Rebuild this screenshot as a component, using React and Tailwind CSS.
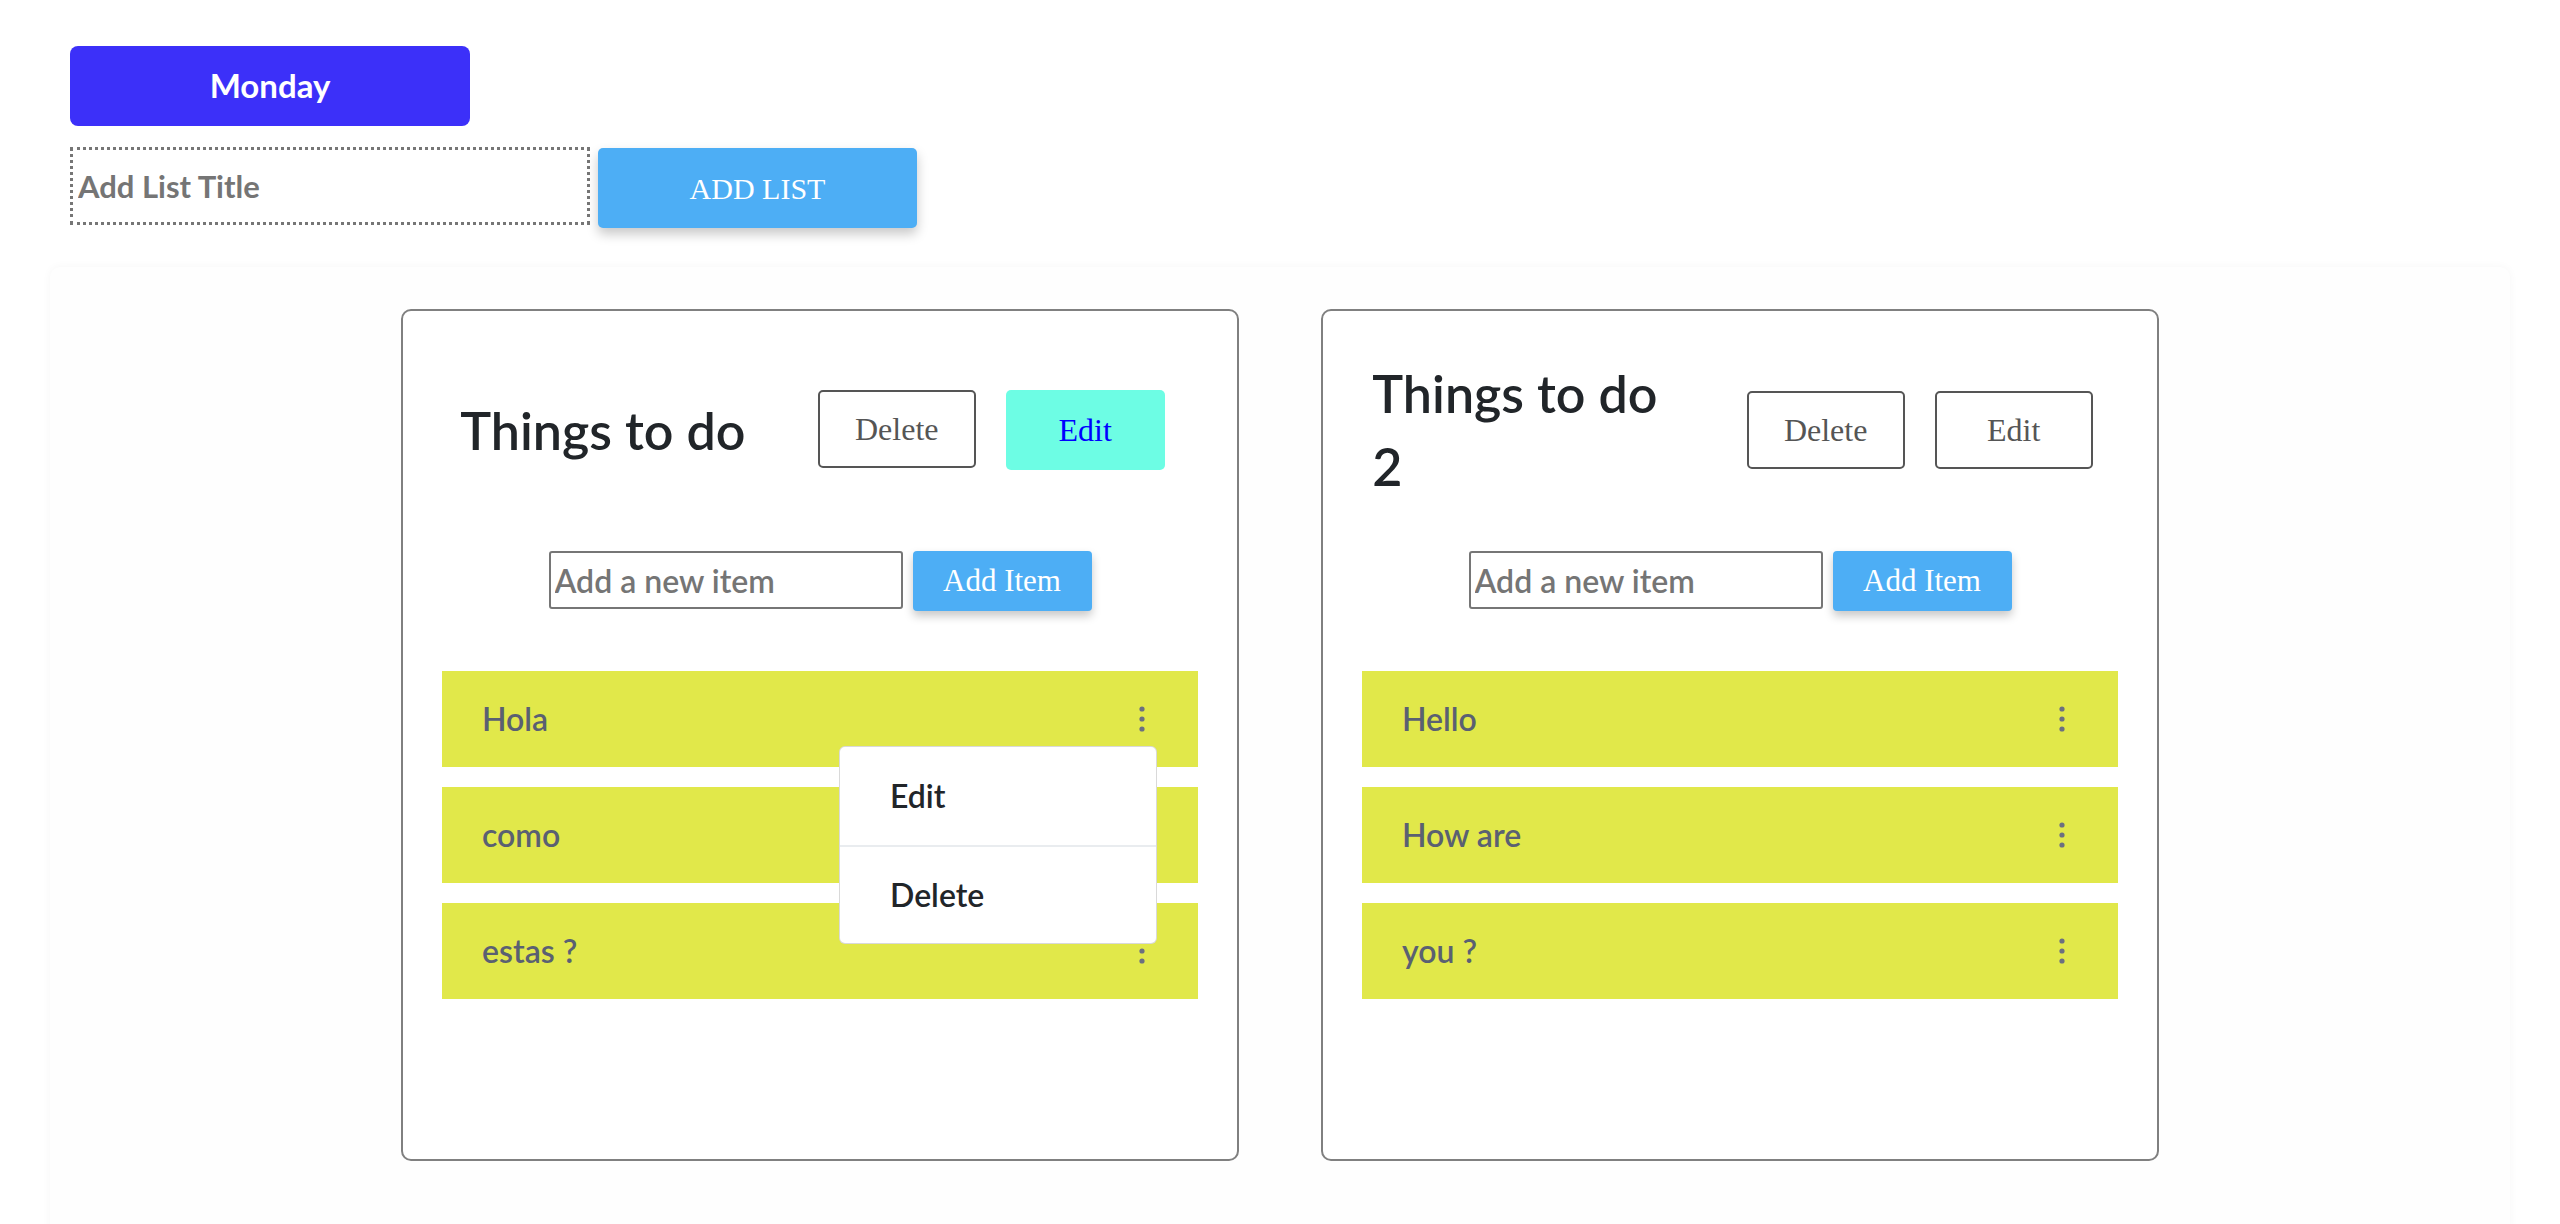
import React from "react";

// Lists shown on the board
const lists = [
  { id: 1, title: "Things to do", items: ["Hola", "como", "estas ?"], editActive: true, menuOn: 0 },
  { id: 2, title: "Things to do 2", items: ["Hello", "How are", "you ?"], editActive: false, menuOn: -1 },
];

const Kebab = () => (
  <svg width="8" height="26" viewBox="0 0 8 26" className="flex-shrink-0">
    <circle cx="4" cy="3" r="2.6" fill="#6b7080" />
    <circle cx="4" cy="13" r="2.6" fill="#6b7080" />
    <circle cx="4" cy="23" r="2.6" fill="#6b7080" />
  </svg>
);

// Dropdown that opens under the kebab
const ItemMenu = () => (
  <div className="absolute right-[41px] top-[75px] z-10 w-[318px] bg-white border border-[rgba(0,0,0,0.15)] rounded-[6px] overflow-hidden">
    <div className="h-[98px] flex items-center pl-[50px] text-[32px] font-semibold text-[#212529]">Edit</div>
    <div className="h-[2px] bg-[#e9ecef]" />
    <div className="h-[96px] flex items-center pl-[50px] text-[32px] font-semibold text-[#212529]">Delete</div>
  </div>
);

const ListCard = ({ title, items, editActive, menuOn }) => (
  <div className="w-[838px] h-[852px] flex-shrink-0 bg-white border-2 border-[#808080] rounded-[10px]">
    {/* Header */}
    <div className="mt-[46px] h-[146px] flex items-center justify-evenly">
      <h2 className="max-w-[310px] text-[52px] leading-[73px] font-semibold text-[#212529]">{title}</h2>
      <div className="flex">
        <button className="mx-[15px] w-[158px] h-[78px] border-2 border-[#555] rounded-[5px] bg-white text-[#555] text-[32px] font-['Liberation_Serif',serif]">
          Delete
        </button>
        {editActive ? (
          <button className="mx-[15px] w-[159px] h-[80px] rounded-[5px] bg-[#6dfde4] text-[#0000ff] text-[32px] font-['Liberation_Serif',serif]">
            Edit
          </button>
        ) : (
          <button className="mx-[15px] w-[158px] h-[78px] border-2 border-[#555] rounded-[5px] bg-white text-[#555] text-[32px] font-['Liberation_Serif',serif]">
            Edit
          </button>
        )}
      </div>
    </div>

    {/* New item row */}
    <div className="mt-[48px] flex justify-center items-start gap-[10px]">
      <input
        placeholder="Add a new item"
        className="w-[354px] h-[58px] border-2 border-[#767676] rounded-[3px] px-[4px] text-[32px] font-semibold text-[#333] placeholder:text-[#757575] outline-none"
      />
      <button className="w-[179px] h-[60px] rounded-[4px] bg-[#4daef5] text-white text-[31px] font-['Liberation_Serif',serif] shadow-[0_5px_10px_rgba(0,0,0,0.22)]">
        Add Item
      </button>
    </div>

    {/* Items */}
    <div className="mt-[60px] mx-[39px] flex flex-col gap-[20px]">
      {items.map((item, i) => (
        <div
          key={item}
          className="relative h-[96px] bg-[#e1e84a] flex items-center justify-between pl-[40px] pr-[52px] text-[32px] font-semibold text-[#5a6072]"
        >
          <span>{item}</span>
          <Kebab />
          {menuOn === i && <ItemMenu />}
        </div>
      ))}
    </div>
  </div>
);

const App = () => {
  return (
    <div className="min-h-screen bg-white font-['Lato',sans-serif]">
      <div className="pt-[46px] pl-[70px]">
        <button className="w-[400px] h-[80px] rounded-[8px] bg-[#3c30f9] text-white text-[33px] font-bold">
          Monday
        </button>
        <div className="mt-[21px] flex items-start gap-[8px]">
          <input
            placeholder="Add List Title"
            className="w-[520px] h-[78px] border-[3px] border-dotted border-[#767676] px-[5px] text-[31px] font-bold text-[#333] placeholder:text-[#757575] outline-none"
          />
          <button className="mt-[1px] w-[319px] h-[80px] rounded-[5px] bg-[#4daef5] text-white text-[30px] font-['Liberation_Serif',serif] shadow-[0_6px_12px_rgba(0,0,0,0.22)]">
            ADD LIST
          </button>
        </div>
      </div>

      {/* Board */}
      <div className="mx-[50px] mt-[39px] pt-[42px] pb-[120px] bg-[#fefefe] rounded-[10px] shadow-[0_0_10px_rgba(0,0,0,0.04)] flex justify-center gap-[82px]">
        {lists.map((list) => (
          <ListCard key={list.id} {...list} />
        ))}
      </div>
    </div>
  );
};

export default App;
